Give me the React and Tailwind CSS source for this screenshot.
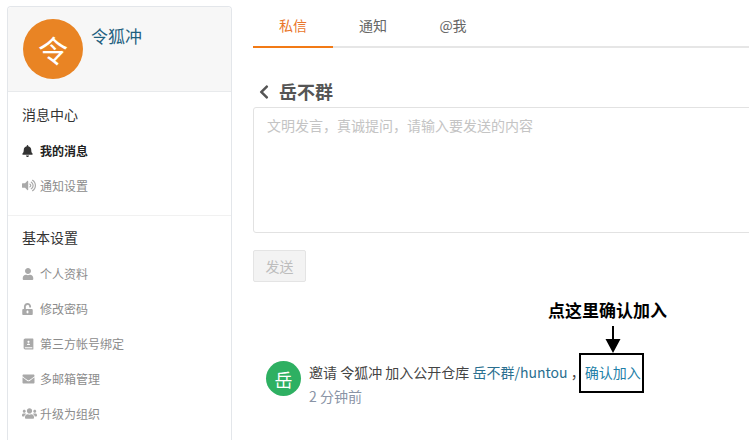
import { FaBell, FaVolumeUp, FaUser, FaUnlockAlt, FaEnvelope, FaUsers, FaChevronLeft } from 'react-icons/fa'
import { RiContactsBook2Fill } from 'react-icons/ri'

function SideItem({ icon: Icon, label, active, size = 'w-[13px] h-[13px]' }) {
  return (
    <div className={`h-[35px] flex items-center ${active ? 'text-[#222] font-semibold' : 'text-[#8c8c8c]'}`}>
      <span className="w-[18px] flex-shrink-0 flex items-center justify-start">
        <Icon className={`${size} ${active ? 'text-[#333]' : 'text-[#a9a9a9]'}`} />
      </span>
      <span className="text-xs leading-none">{label}</span>
    </div>
  )
}

function Sidebar() {
  return (
    <aside className="w-[225px] flex-shrink-0 h-[440px] mt-[6px] border border-b-0 border-[#e3e6ea] rounded-t-[4px] bg-white">
      <div className="h-[85px] bg-[#f7f7f7] border-b border-[#e8eaec] rounded-t-[4px] flex pl-[15px] pt-[12px]">
        <div className="w-[60px] h-[60px] rounded-full bg-[#e98424] text-white text-[30px] flex items-center justify-center flex-shrink-0">令</div>
        <div className="ml-[8px] mt-[5px] text-[17px] leading-[24px] text-[#1f5f7f]">令狐冲</div>
      </div>
      <div className="pl-[14px] pt-[12px] border-b border-[#f1f1f1] h-[124px]">
        <h3 className="text-sm text-[#333] font-normal leading-[20px] mb-[9px]">消息中心</h3>
        <SideItem icon={FaBell} label="我的消息" active size="w-[11px] h-[12px]" />
        <SideItem icon={FaVolumeUp} label="通知设置" size="w-[14px] h-[13px]" />
      </div>
      <div className="pl-[14px] pt-[11px]">
        <h3 className="text-sm text-[#333] font-normal leading-[20px] mb-[9px]">基本设置</h3>
        <SideItem icon={FaUser} label="个人资料" size="w-[12px] h-[12px]" />
        <SideItem icon={FaUnlockAlt} label="修改密码" size="w-[11px] h-[12px]" />
        <SideItem icon={RiContactsBook2Fill} label="第三方帐号绑定" size="w-[13px] h-[14px]" />
        <SideItem icon={FaEnvelope} label="多邮箱管理" size="w-[13px] h-[12px]" />
        <SideItem icon={FaUsers} label="升级为组织" size="w-[15px] h-[13px]" />
      </div>
    </aside>
  )
}

function Tabs() {
  return (
    <div className="flex h-[48px] border-b-2 border-[#e6e6e6] text-sm">
      <div className="w-[80px] h-[48px] pt-[4px] border-b-2 border-[#f27a15] flex items-center justify-center text-[#e9762b]">私信</div>
      <div className="w-[80px] h-[48px] pt-[4px] pb-[2px] flex items-center justify-center text-[#666]">通知</div>
      <div className="w-[80px] h-[48px] pt-[4px] pb-[2px] flex items-center justify-center text-[#666]">@我</div>
    </div>
  )
}

export default function App() {
  return (
    <div className="relative w-[749px] h-[440px] overflow-hidden bg-white flex pl-[7px] font-['Noto_Sans_CJK_SC','Liberation_Sans',sans-serif]">
      <Sidebar />
      <main className="ml-[21px] w-[560px] flex-shrink-0">
        <Tabs />
        <div className="flex items-center h-[24px] mt-[32px] mb-[3px] text-[#555]">
          <FaChevronLeft className="w-[12px] h-[16px] ml-[5px] mr-[9px]" />
          <span className="text-lg leading-[22px] font-bold -mt-[2px]">岳不群</span>
        </div>
        <div className="h-[126px] border border-[#e2e2e2] rounded-[3px] pl-[13px] pt-[7px] text-sm leading-[20px] text-[#c4c4c4]">
          文明发言，真诚提问，请输入要发送的内容
        </div>
        <button className="mt-[17px] w-[53px] h-[32px] bg-[#f3f3f3] border border-[#e4e4e4] rounded-[2px] text-sm text-[#bdbdbd]">发送</button>
        <div className="flex mt-[79px] ml-[13px]">
          <div className="w-[35px] h-[35px] rounded-full bg-[#2eb062] text-white text-lg flex items-center justify-center flex-shrink-0">岳</div>
          <div className="ml-[8px] mt-[1px]">
            <p className="text-sm leading-[20px] text-[#444] whitespace-nowrap">
              邀请 令狐冲 加入公开仓库 <span className="text-[#2a6f8f]">岳不群/huntou</span> ，<span className="text-[#1f7fa8]">确认加入</span>
            </p>
            <p className="text-sm leading-[20px] mt-[4px] text-[#8a94a6]">2 分钟前</p>
          </div>
        </div>
      </main>
      <div className="absolute left-[548px] top-[299px] text-[17px] leading-[22px] font-bold text-black whitespace-nowrap">点这里确认加入</div>
      <svg className="absolute left-[605px] top-[326px]" width="16" height="27" viewBox="0 0 16 27">
        <path d="M7 0h2v13h6.5L8 27 .5 13H7z" fill="#000" />
      </svg>
      <div className="absolute left-[579px] top-[353px] w-[65px] h-[40px] border-2 border-black" />
    </div>
  )
}
